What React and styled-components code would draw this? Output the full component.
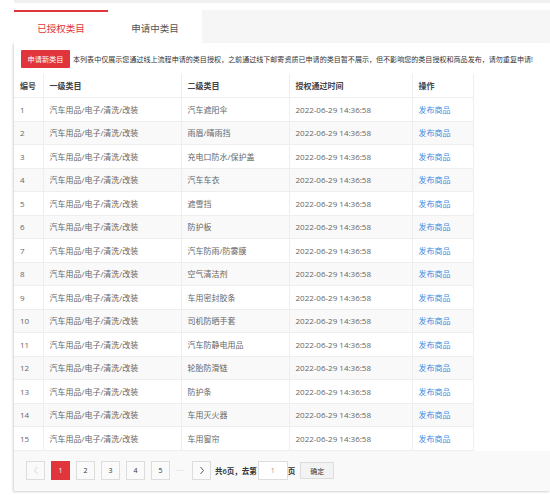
import styled, { createGlobalStyle } from "styled-components";

const GlobalStyle = createGlobalStyle`
    body {
        margin: 0;
        background: #fff;
        font-family: "Open Sans", "Noto Sans CJK SC", sans-serif;
    }
`;

const Page = styled.div`
    width: 550px;
    height: 495px;
    padding-left: 14px;
    box-sizing: border-box;
    overflow: hidden;
`;

const TopStrip = styled.div`
    height: 3px;
    background: #f1f1f1;
    margin-bottom: 7px;
`;

const TabBar = styled.div`
    display: flex;
    height: 33px;
    background: #f6f6f6;
`;

const Tab = styled.div`
    width: 94px;
    display: flex;
    align-items: center;
    justify-content: center;
    background: #fff;
    font-size: 9.5px;
    color: ${({ active }) => (active ? "#e0353b" : "#555")};
    border-top: 2px solid ${({ active }) => (active ? "#e0353b" : "#fff")};
    box-sizing: border-box;
`;

const Card = styled.div`
    background: #fff;
    box-shadow: -1px 1px 2px rgba(0, 0, 0, 0.18);
    margin-bottom: 3px;
`;

const Notice = styled.div`
    display: flex;
    align-items: center;
    gap: 3px;
    height: 31px;
    padding-left: 7px;
`;

const RedButton = styled.div`
    flex-shrink: 0;
    height: 18px;
    width: 49px;
    display: flex;
    align-items: center;
    justify-content: center;
    background: #e0353b;
    color: #fff;
    font-size: 7.2px;
    border-radius: 1px;
`;

const NoticeText = styled.span`
    font-size: 7.05px;
    color: #333;
    white-space: nowrap;
`;

const Table = styled.table`
    border-collapse: collapse;
    table-layout: fixed;
    width: 459px;
    font-size: 8px;
`;

const Th = styled.th`
    height: 23.5px;
    padding: 0 0 0 6px;
    text-align: left;
    font-weight: 600;
    color: #444;
    border: 1px solid #eee;
    border-top: none;
    box-sizing: border-box;
    width: ${({ w }) => w}px;
    &:first-child { border-left: none; }
`;

const Row = styled.tr`
    background: ${({ odd }) => (odd ? "#fff" : "#f9f9f9")};
`;

const Td = styled.td`
    height: 23.5px;
    padding: 0 0 0 6px;
    color: #666;
    border: 1px solid #eee;
    box-sizing: border-box;
    white-space: nowrap;
    &:first-child { border-left: none; }
`;

const Link = styled.span`
    color: #3d8be0;
`;

const Pager = styled.div`
    display: flex;
    align-items: center;
    height: 40px;
    padding-left: 12px;
    background: #f9f9f9;
    font-size: 7px;
    color: #333;
`;

const PageBtn = styled.div`
    width: 19px;
    height: 19px;
    box-sizing: border-box;
    display: flex;
    align-items: center;
    justify-content: center;
    margin-right: 6px;
    border: 1px solid ${({ active }) => (active ? "#e0353b" : "#ddd")};
    background: ${({ active }) => (active ? "#e0353b" : "#fafafa")};
    color: ${({ active, disabled }) => (active ? "#fff" : disabled ? "#ccc" : "#333")};
`;

const Dots = styled.span`
    width: 16px;
    color: #bbb;
    letter-spacing: 1px;
`;

const PagerText = styled.span`
    font-size: 7.5px;
    font-weight: 600;
    color: #333;
    margin: 0 1px 0 -2px;
`;

const PageInput = styled.div`
    width: 30px;
    height: 19px;
    box-sizing: border-box;
    border: 1px solid #ddd;
    background: #fff;
    display: flex;
    align-items: center;
    justify-content: center;
    color: #999;
    margin-right: 2px;
`;

const ConfirmBtn = styled.div`
    width: 34px;
    height: 17px;
    box-sizing: border-box;
    border: 1px solid #ddd;
    background: #f3f3f3;
    display: flex;
    align-items: center;
    justify-content: center;
    margin-left: 4px;
    font-size: 7px;
    color: #333;
`;

const Chevron = ({ dir }) => (
    <svg width="6" height="9" viewBox="0 0 6 9">
        <path
            d={dir === "left" ? "M4.5 1 L1.5 4.5 L4.5 8" : "M1.5 1 L4.5 4.5 L1.5 8"}
            fill="none"
            stroke="currentColor"
            strokeWidth="0.8"
        />
    </svg>
);

const subs = [
    "汽车遮阳伞", "雨眉/晴雨挡", "充电口防水/保护盖", "汽车车衣", "遮雪挡",
    "防护板", "汽车防雨/防雾膜", "空气清洁剂", "车用密封胶条", "司机防晒手套",
    "汽车防静电用品", "轮胎防滑链", "防护条", "车用灭火器", "车用窗帘",
];

const App = () => {
    return (
        <Page>
            <GlobalStyle />
            <TopStrip />
            <TabBar>
                <Tab active>已授权类目</Tab>
                <Tab>申请中类目</Tab>
            </TabBar>
            <Card>
                <Notice>
                    <RedButton>申请新类目</RedButton>
                    <NoticeText>
                        本列表中仅展示您通过线上流程申请的类目授权，之前通过线下邮寄资质已申请的类目暂不展示，但不影响您的类目授权和商品发布，请勿重复申请!
                    </NoticeText>
                </Notice>
                <Table>
                    <thead>
                        <tr>
                            <Th w={29}>编号</Th>
                            <Th w={138}>一级类目</Th>
                            <Th w={108}>二级类目</Th>
                            <Th w={123}>授权通过时间</Th>
                            <Th w={61}>操作</Th>
                        </tr>
                    </thead>
                    <tbody>
                        {subs.map((s, i) => (
                            <Row key={i} odd={i % 2 === 0}>
                                <Td>{i + 1}</Td>
                                <Td>汽车用品/电子/清洗/改装</Td>
                                <Td>{s}</Td>
                                <Td>2022-06-29 14:36:58</Td>
                                <Td><Link>发布商品</Link></Td>
                            </Row>
                        ))}
                    </tbody>
                </Table>
                <Pager>
                    <PageBtn disabled><Chevron dir="left" /></PageBtn>
                    <PageBtn active>1</PageBtn>
                    <PageBtn>2</PageBtn>
                    <PageBtn>3</PageBtn>
                    <PageBtn>4</PageBtn>
                    <PageBtn>5</PageBtn>
                    <Dots>···</Dots>
                    <PageBtn><Chevron dir="right" /></PageBtn>
                    <PagerText>共6页，去第</PagerText>
                    <PageInput>1</PageInput>
                    <PagerText>页</PagerText>
                    <ConfirmBtn>确定</ConfirmBtn>
                </Pager>
            </Card>
        </Page>
    );
};

export default App;
